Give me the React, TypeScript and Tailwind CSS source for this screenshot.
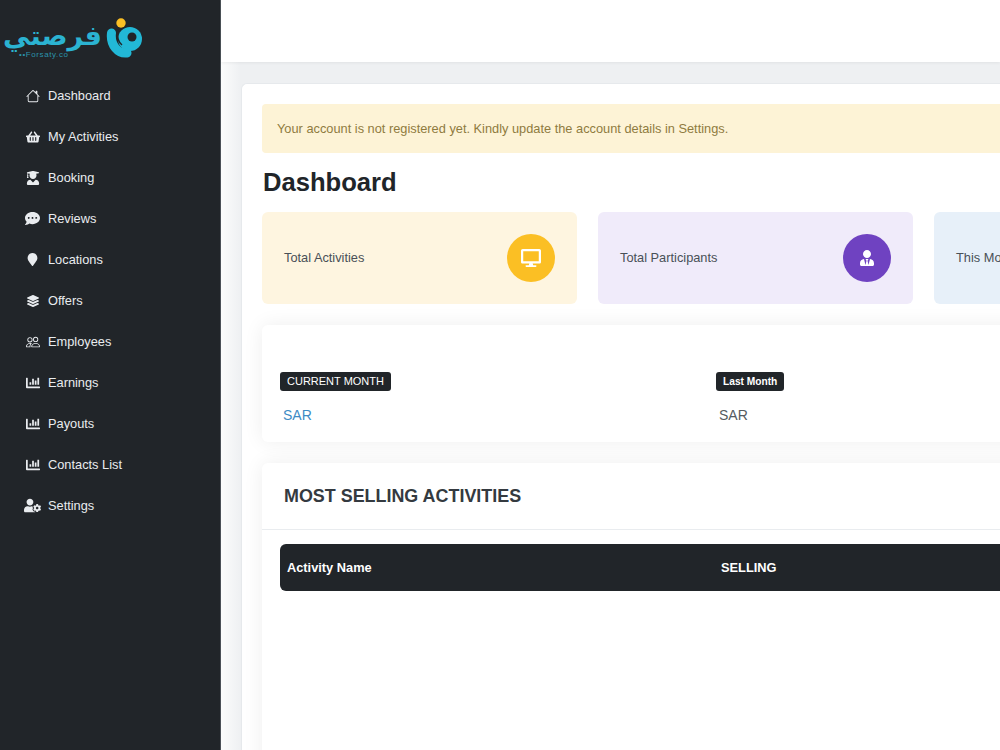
import React from "react";
import { FaShoppingBasket, FaCommentDots, FaMapMarker, FaLayerGroup, FaUserCog, FaUserTie, FaDesktop, FaUserGraduate, FaChartBar } from "react-icons/fa";
import { BsHouse, BsPeople } from "react-icons/bs";

const items: [string, React.ReactNode][] = [
  ["Dashboard", <BsHouse className="text-[14px]" />],
  ["My Activities", <FaShoppingBasket className="text-[14px]" />],
  ["Booking", <FaUserGraduate className="text-[14px]" />],
  ["Reviews", <FaCommentDots className="text-[15px]" />],
  ["Locations", <FaMapMarker className="text-[13px]" />],
  ["Offers", <FaLayerGroup className="text-[12px]" />],
  ["Employees", <BsPeople className="text-[14px]" />],
  ["Earnings", <FaChartBar className="text-[14px]" />],
  ["Payouts", <FaChartBar className="text-[14px]" />],
  ["Contacts List", <FaChartBar className="text-[14px]" />],
  ["Settings", <FaUserCog className="text-[17px]" />],
];

function Logo() {
  return (
    <div className="h-[75px] flex items-start pl-[18px] pt-[18px]">
      <div className="flex flex-col w-[84px] pt-[3px]">
        <span className="text-[#2bb3d1] text-[27px] leading-[30px] font-bold font-['DejaVu_Sans',sans-serif]" dir="rtl">فرصتي</span>
        <span className="text-[#2b93ab] text-[8px] leading-[8px] tracking-[0.6px] pl-[1px] font-['Liberation_Sans',sans-serif]">••Forsaty.co</span>
      </div>
      <svg width="36" height="40" viewBox="0 0 36 40" className="ml-[4px]">
        <circle cx="15" cy="5" r="4.7" fill="#fbbf24" />
        <circle cx="24" cy="21" r="12" fill="#22b8d6" />
        <path d="M5.5 15 C4 27 12 36 21 35" stroke="#22b8d6" strokeWidth="9" strokeLinecap="round" fill="none" />
        <path d="M11.5 12 C11 18 12 24 16 27" stroke="#212529" strokeWidth="1.5" fill="none" />
        <circle cx="26" cy="19" r="4.5" fill="#212529" />
      </svg>
    </div>
  );
}

function Stat({ label, bg, circle, icon }: { label: string; bg: string; circle?: string; icon?: React.ReactNode }) {
  return (
    <div className={`w-[315px] shrink-0 h-[92px] rounded-[6px] flex items-center justify-between px-[22px] ${bg}`}>
      <span className="text-[12.8px] text-[#495057]">{label}</span>
      {circle && <div className={`w-[48px] h-[48px] rounded-full flex items-center justify-center text-white ${circle}`}>{icon}</div>}
    </div>
  );
}

export default function App() {
  return (
    <div className="flex w-[1000px] h-[750px] overflow-hidden font-['Liberation_Sans',Arial,sans-serif]">
      <aside className="w-[221px] shrink-0 bg-[#212529] border-r border-[#4b5157]">
        <Logo />
        <nav className="flex flex-col">
          {items.map(([t, ic]) => (
            <div key={t} className="h-[41px] flex items-center text-[#e9ecef] text-[12.8px]">
              <span className="w-[48px] pl-[24px] pr-[7px] flex justify-center shrink-0">{ic}</span>
              <span>{t}</span>
            </div>
          ))}
        </nav>
      </aside>
      <main className="flex-1 min-w-0 flex flex-col">
        <header className="h-[62px] shrink-0 bg-white relative z-10 shadow-[0_1px_3px_rgba(0,0,0,0.06)]" />
        <div className="pl-[20px] pt-[21px] flex-1 overflow-hidden bg-[linear-gradient(90deg,#fbfcfc,#eef0f2_20px)]">
          <div className="w-[1000px] h-[800px] bg-white rounded-tl-[6px] border-l border-t border-[#e6e9ec] pl-[20px] pt-[20px]">
            <div className="h-[49px] bg-[#fdf3d6] rounded-[4px] flex items-center pl-[15px] text-[12.8px] text-[#8f7b3f]">
              Your account is not registered yet. Kindly update the account details in Settings.
            </div>
            <h1 className="text-[25.6px] leading-[30px] font-bold text-[#212529] pl-[1px] mt-[14px] mb-[15px]">Dashboard</h1>
            <div className="flex gap-[21px]">
              <Stat label="Total Activities" bg="bg-[#fef5e0]" circle="bg-[#fbbf24]" icon={<FaDesktop className="text-[20px]" />} />
              <Stat label="Total Participants" bg="bg-[#f0ebfa]" circle="bg-[#6f42c1]" icon={<FaUserTie className="text-[16px]" />} />
              <Stat label="This Month" bg="bg-[#e7f0f9]" />
            </div>
            <section className="mt-[21px] h-[117px] bg-white rounded-l-[6px] shadow-[0_0_20px_rgba(0,0,0,0.07)] pl-[18px] pt-[43px] flex">
              <div className="w-[436px]">
                <span className="inline-block h-[19px] leading-[19px] px-[7px] rounded-[3px] bg-[#212529] text-white text-[11px]">CURRENT MONTH</span>
                <div className="text-[14px] leading-[20px] text-[#3d8bc4] pl-[3px] mt-[13px]">SAR</div>
              </div>
              <div>
                <span className="inline-block h-[19px] leading-[19px] px-[7px] rounded-[3px] bg-[#212529] text-white text-[10.2px] font-bold">Last Month</span>
                <div className="text-[14px] leading-[20px] text-[#555b61] pl-[3px] mt-[13px]">SAR</div>
              </div>
            </section>
            <section className="mt-[21px] h-[400px] bg-white rounded-l-[6px] shadow-[0_0_20px_rgba(0,0,0,0.07)]">
              <div className="h-[67px] border-b border-[#e9ecef] flex items-center pl-[22px]">
                <h2 className="text-[17.92px] font-bold text-[#343a40]">MOST SELLING ACTIVITIES</h2>
              </div>
              <div className="ml-[18px] mt-[14px] h-[47px] bg-[#212529] rounded-l-[6px] flex items-center text-white text-[12.8px] font-bold">
                <span className="w-[441px] pl-[7px]">Activity Name</span>
                <span>SELLING</span>
              </div>
            </section>
          </div>
        </div>
      </main>
    </div>
  );
}
